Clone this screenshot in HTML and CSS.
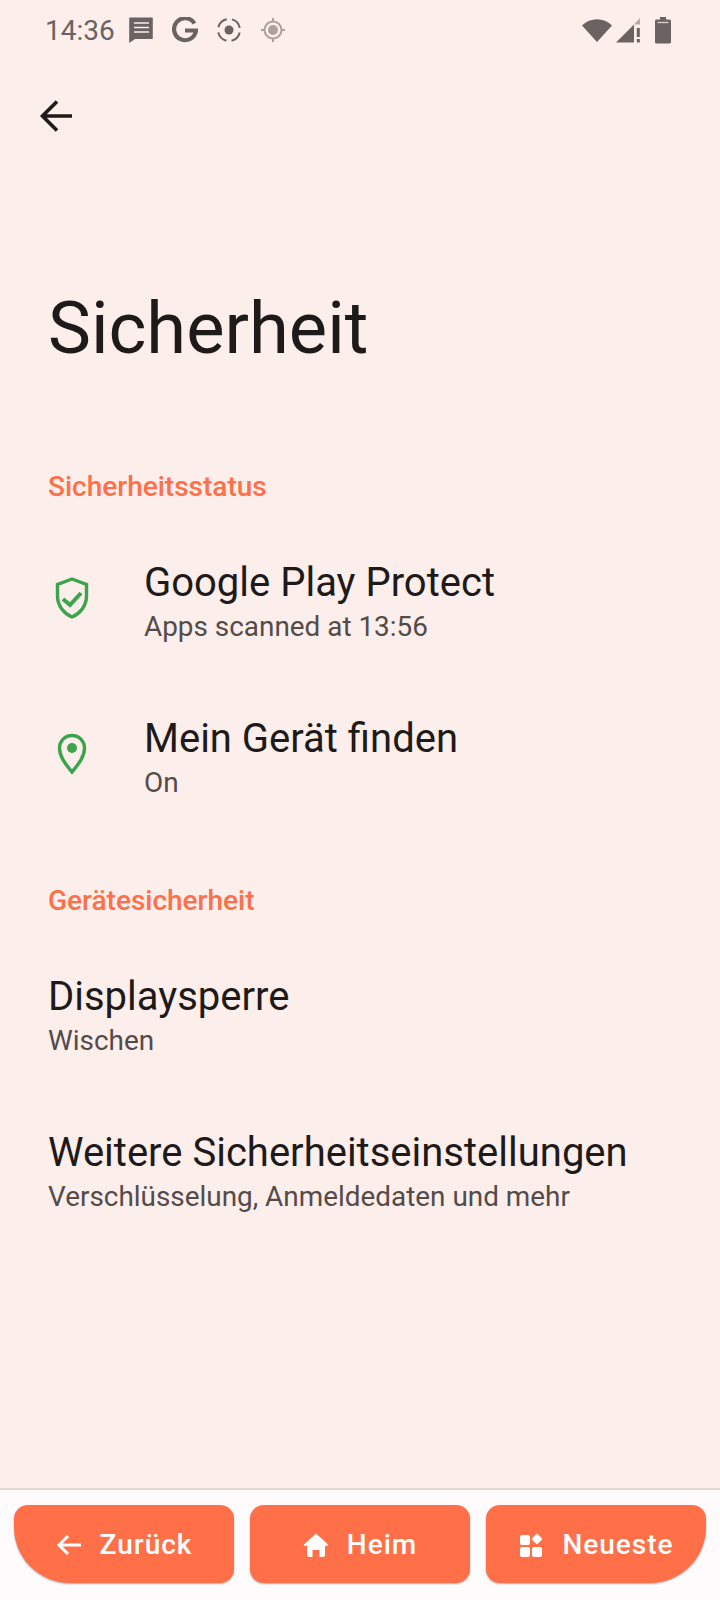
FILE: index.html
```html
<!DOCTYPE html>
<html lang="de">

<head>
    <meta charset="UTF-8">
    <meta name="viewport" content="width=device-width, initial-scale=1.0">
    <title>Sicherheit</title>
    <link rel="stylesheet" href="styles.css">
</head>

<body>
    <div class="screen">
        <div class="status-bar">
            <div class="status-left">
                <span class="clock">14:36</span>
                <svg class="status-icon" viewBox="0 0 26 26"><path d="M2 .5h22a.8.8 0 0 1 .8.8v20a.8.8 0 0 1-.8.8H7L1.200 26V1.300a.8.8 0 0 1 .8-.8z" fill="#6b6361"/><path d="M6 6h15M6 10.500h15M6 15h15" stroke="#fceeeb" stroke-width="1.500"/></svg>
                <svg class="status-icon" viewBox="0 0 26 26"><path d="M22.500 6.500A11 11 0 1 0 24 13.500H13" fill="none" stroke="#6b6361" stroke-width="4.200"/></svg>
                <svg class="status-icon" viewBox="0 0 26 26"><circle cx="13" cy="13" r="4.500" fill="#6b6361"/><circle cx="13" cy="13" r="11" fill="none" stroke="#6b6361" stroke-width="2" stroke-dasharray="12 5.280" stroke-dashoffset="-2.600"/></svg>
                <svg class="status-icon faded" viewBox="0 0 26 26"><circle cx="13" cy="13" r="5" fill="#6b6361"/><circle cx="13" cy="13" r="8.500" fill="none" stroke="#6b6361" stroke-width="2"/><path d="M13 1v4M13 21v4M1 13h4M21 13h4" stroke="#6b6361" stroke-width="2"/></svg>
            </div>
            <div class="status-right">
                <svg class="wifi" viewBox="0 0 32 28"><path d="M1 9.500C9.500 1 22.500 1 31 9.500L16 26z" fill="#6b6361"/></svg>
                <svg class="signal" viewBox="0 0 26 26"><path d="M1 25.500 19 7.500V25.500z" fill="#6b6361"/><path d="M25 1V7.500L19 7.500z" fill="#6b6361" opacity=".5"/><path d="M21.800 11h3v9h-3zM21.800 22h3v3.500h-3z" fill="#6b6361"/></svg>
                <svg class="battery" viewBox="0 0 18 28"><path d="M6 1h6v2.500h3.500a1.500 1.500 0 0 1 1.500 1.500v21a1.500 1.500 0 0 1-1.500 1.500h-13A1.500 1.500 0 0 1 1 26V5a1.500 1.500 0 0 1 1.500-1.500H6z" fill="#6b6361"/><path d="M3.500 6.500h11" stroke="#d8cdca" stroke-width="1.300"/></svg>
            </div>
        </div>

        <div class="toolbar">
            <svg class="back" viewBox="0 0 34 34"><path d="M33 17H4M18 2.500 3.500 17 18 31.500" fill="none" stroke="#1e1a19" stroke-width="3.600"/></svg>
        </div>

        <h1>Sicherheit</h1>

        <h2 class="section first">Sicherheitsstatus</h2>
        <div class="row with-icon">
            <svg class="row-icon" viewBox="0 0 34 42"><path d="M17 2 31.500 7.500V19C31.500 29 25 36.500 17 40 9 36.500 2.500 29 2.500 19V7.500z" fill="none" stroke="#3ba44d" stroke-width="3.400"/><path d="M8 22l7 6 11-12" fill="none" stroke="#3ba44d" stroke-width="4"/></svg>
            <div class="row-text">
                <div class="row-title">Google Play Protect</div>
                <div class="row-sub">Apps scanned at 13:56</div>
            </div>
        </div>
        <div class="row with-icon">
            <svg class="row-icon" viewBox="0 0 34 42"><path d="M17 39C10.500 31 4.500 24 4.500 15a12.500 12.500 0 0 1 25 0C29.500 24 23.500 31 17 39z" fill="none" stroke="#3ba44d" stroke-width="3.400"/><circle cx="17" cy="15" r="5" fill="#3ba44d"/></svg>
            <div class="row-text">
                <div class="row-title">Mein Gerät finden</div>
                <div class="row-sub">On</div>
            </div>
        </div>

        <h2 class="section">Gerätesicherheit</h2>
        <div class="row">
            <div class="row-text">
                <div class="row-title">Displaysperre</div>
                <div class="row-sub">Wischen</div>
            </div>
        </div>
        <div class="row">
            <div class="row-text">
                <div class="row-title">Weitere Sicherheitseinstellungen</div>
                <div class="row-sub">Verschlüsselung, Anmeldedaten und mehr</div>
            </div>
        </div>

        <div class="bottom-bar">
            <div class="nav-btn left">
                <svg class="nav-icon" viewBox="0 0 26 26"><path d="M25 13H3M12 4 3 13l9 9" fill="none" stroke="#fff" stroke-width="3"/></svg>
                <span>Zurück</span>
            </div>
            <div class="nav-btn">
                <svg class="nav-icon" viewBox="0 0 26 26"><path d="M13 1.500 25 12.500a.8.8 0 0 1-.6 1.300H22V23a2 2 0 0 1-2 2h-3.500v-7h-7v7H6a2 2 0 0 1-2-2v-9.200H1.600a.8.8 0 0 1-.6-1.300z" fill="#fff"/></svg>
                <span>Heim</span>
            </div>
            <div class="nav-btn right">
                <svg class="nav-icon" viewBox="0 0 26 26"><rect x="2" y="3" width="10" height="10" rx="2" fill="#fff"/><rect x="2" y="15" width="10" height="10" rx="2" fill="#fff"/><rect x="14" y="15" width="10" height="10" rx="2" fill="#fff"/><rect x="15" y="3" width="8" height="8" rx="1.500" fill="#fff" transform="rotate(45 19 7)"/></svg>
                <span>Neueste</span>
            </div>
        </div>
    </div>
</body>

</html>
```

FILE: styles.css
```css
body {
    margin: 0;
    padding: 0;
    font-family: Roboto, sans-serif;
    background-color: #fceeeb;
}

.screen {
    height: 1600px;
    display: flex;
    flex-direction: column;
}

.status-bar {
    height: 60px;
    padding: 0 48px 0 45px;
    display: flex;
    justify-content: space-between;
    align-items: center;
    box-sizing: border-box;
}

.status-left,
.status-right {
    display: flex;
    align-items: center;
}

.clock {
    font-size: 28px;
    color: #6b6361;
    margin-right: 13px;
}

.status-icon {
    width: 26px;
    height: 26px;
    margin-right: 18px;
}

.faded {
    opacity: .55;
}

.wifi {
    width: 32px;
    height: 28px;
    margin-right: 2px;
}

.signal {
    width: 26px;
    height: 26px;
    margin-right: 13px;
}

.battery {
    width: 18px;
    height: 28px;
}

.toolbar {
    height: 112px;
    padding-left: 39px;
    display: flex;
    align-items: center;
}

.back {
    width: 34px;
    height: 34px;
}

h1 {
    margin: 107px 0 0;
    padding: 0 0 0 48px;
    font-size: 72.300px;
    line-height: 100px;
    font-weight: 400;
    color: #1e1a19;
}

.section {
    margin: 44px 0 26px;
    padding-left: 48px;
    font-size: 28px;
    line-height: 32px;
    font-weight: 500;
    color: #ff7049;
}

.section.first {
    margin-top: 92px;
}

.row {
    height: 156px;
    box-sizing: border-box;
    padding: 29px 48px 0;
    display: flex;
}

.row-icon {
    width: 34px;
    height: 42px;
    margin: 19px 0 0 7px;
    flex-shrink: 0;
}

.with-icon .row-text {
    margin-left: 55px;
}

.row-title {
    font-size: 40px;
    line-height: 50px;
    color: #1e1a19;
}

.row-sub {
    font-size: 27.900px;
    line-height: 38px;
    color: #544b49;
}

.bottom-bar {
    margin-top: auto;
    height: 112px;
    box-sizing: border-box;
    border-top: 2px solid #e2d6d3;
    background-color: #fdfbfb;
    padding: 15px 14px 0;
    display: flex;
    gap: 16px;
}

.nav-btn {
    width: 220px;
    height: 78px;
    box-sizing: border-box;
    padding-top: 1px;
    background-color: #ff7049;
    border-radius: 14px;
    box-shadow: 0 1px 2px rgba(0, 0, 0, .3);
    color: white;
    font-size: 28px;
    font-weight: 500;
    letter-spacing: 1px;
    display: flex;
    justify-content: center;
    align-items: center;
    gap: 18px;
}

.nav-btn.left {
    border-bottom-left-radius: 56px;
}

.nav-btn.right {
    border-bottom-right-radius: 56px;
}

.nav-icon {
    width: 26px;
    height: 26px;
}
```
